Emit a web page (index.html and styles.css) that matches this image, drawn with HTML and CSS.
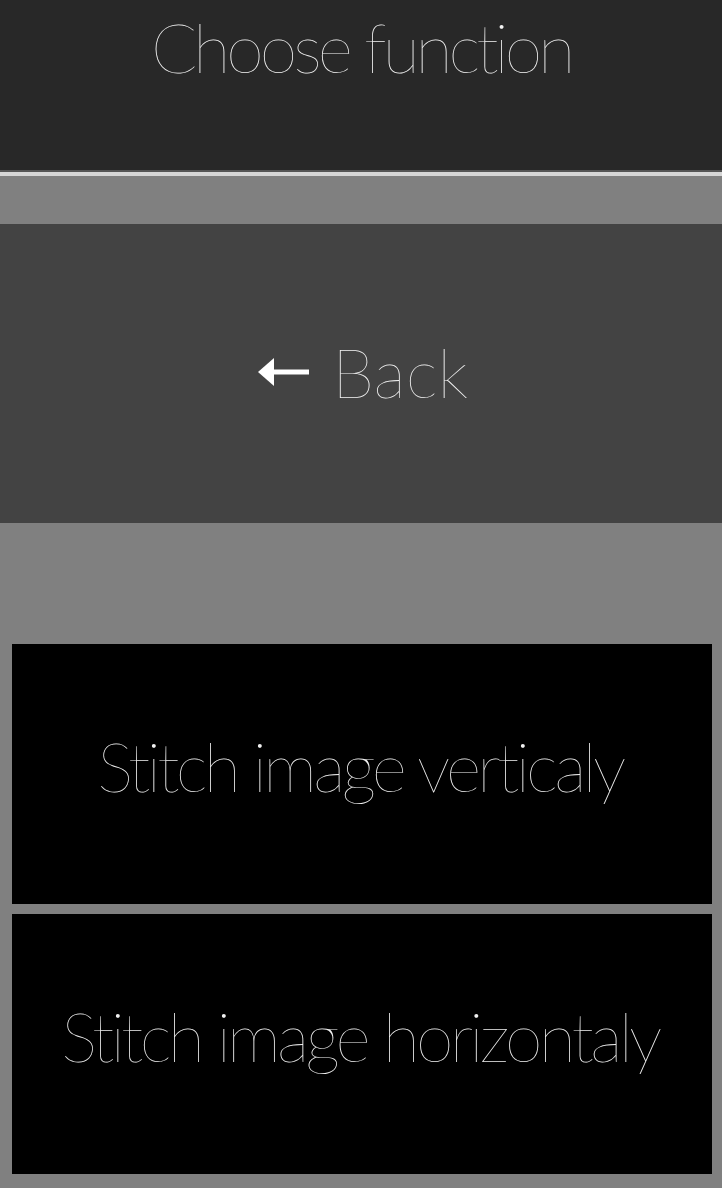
FILE: index.html
```html
<!DOCTYPE html>
<html>
<head>
<meta charset="utf-8">
<link rel="stylesheet" href="styles.css">
</head>
<body>
<header class="header"><h1 class="title">Choose function</h1></header>
<div class="rule"></div>
<div class="content">
  <button class="back">
    <svg class="arrow" width="51" height="30" viewBox="0 0 51 30"><polygon points="0,15 16,1 16,29" fill="#fff"/><rect x="14" y="12.5" width="37" height="5" fill="#fff"/></svg>
    <span class="back-label">Back</span>
  </button>
  <div class="list">
    <button class="item">Stitch image verticaly</button>
    <button class="item">Stitch image horizontaly</button>
  </div>
</div>
</body>
</html>
```
FILE: styles.css
```css
html, body {
  margin: 0;
  padding: 0;
  background: #808080;
  width: 722px;
  height: 1188px;
  overflow: hidden;
  font-family: Lato, "Liberation Sans", sans-serif;
  font-weight: 200;
  font-variant-ligatures: none;
  color: #ffffff;
}
.header {
  height: 170px;
  background: #282828;
  border-bottom: 2px solid #555555;
}
.rule {
  height: 4px;
  background: #d6d6d6;
}
.title {
  margin: 0;
  font-size: 68px;
  font-weight: 200;
  line-height: 94px;
  letter-spacing: -4px;
  text-align: center;
  white-space: nowrap;
  color: #f4f4f4;
}
.content {
  padding-top: 48px;
  display: flex;
  flex-direction: column;
}
.back {
  height: 299px;
  background: #434343;
  border: none;
  padding: 0 0 3px 4px;
  display: flex;
  align-items: center;
  justify-content: center;
  gap: 23px;
  font-family: inherit;
  font-weight: 200;
  font-variant-ligatures: none;
  font-size: 68px;
  line-height: 68px;
  color: #f4f4f4;
}
.arrow {
  display: block;
}
.list {
  margin-top: 121px;
  padding: 0 10px 0 12px;
  display: flex;
  flex-direction: column;
  gap: 10px;
}
.item {
  height: 260px;
  background: #000000;
  border: none;
  color: #f0f0f0;
  font-family: inherit;
  font-weight: 200;
  font-variant-ligatures: none;
  font-size: 68px;
  line-height: 68px;
  letter-spacing: -3.7px;
  white-space: nowrap;
  padding: 0 4px 16px 0;
}
```
